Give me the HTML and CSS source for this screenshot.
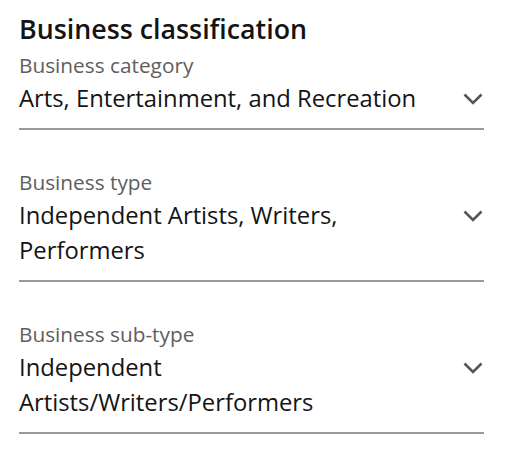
FILE: index.html
```html
<!DOCTYPE html>
<html>
<head>
<meta charset="utf-8">
<link rel="stylesheet" href="styles.css">
</head>
<body>
<section class="panel">
  <h2 class="title">Business classification</h2>
  <div class="field">
    <div class="label">Business category</div>
    <div class="control">
      <div class="value">Arts, Entertainment, and Recreation</div>
      <svg class="chev" viewBox="0 0 20 12" width="20" height="12"><path d="M1.5 1.5 L10 10 L18.5 1.5" fill="none" stroke="#555" stroke-width="2.6"/></svg>
    </div>
  </div>
  <div class="field">
    <div class="label">Business type</div>
    <div class="control">
      <div class="value">Independent Artists, Writers, Performers</div>
      <svg class="chev" viewBox="0 0 20 12" width="20" height="12"><path d="M1.5 1.5 L10 10 L18.5 1.5" fill="none" stroke="#555" stroke-width="2.6"/></svg>
    </div>
  </div>
  <div class="field">
    <div class="label">Business sub-type</div>
    <div class="control">
      <div class="value">Independent Artists/Writers/Performers</div>
      <svg class="chev" viewBox="0 0 20 12" width="20" height="12"><path d="M1.5 1.5 L10 10 L18.5 1.5" fill="none" stroke="#555" stroke-width="2.6"/></svg>
    </div>
  </div>
</section>
</body>
</html>
```
FILE: styles.css
```css
html, body {
  margin: 0;
  padding: 0;
  background: #fff;
}
body {
  font-family: "Open Sans", "Liberation Sans", sans-serif;
  color: #1a1a1a;
}
.panel {
  width: 465px;
  padding: 11px 0 0 19px;
}
.title {
  margin: 0 0 3px;
  font-size: 26.8px;
  font-weight: 600;
  line-height: 36px;
  color: #141414;
}
.field {
  border-bottom: 2px solid #9a9a9a;
  margin-bottom: 37px;
}
.label {
  font-size: 20.8px;
  line-height: 31px;
  color: #5e5e5e;
}
.control {
  display: flex;
  align-items: flex-start;
  justify-content: space-between;
  padding-bottom: 12px;
}
.value {
  flex: 1;
  margin-right: 24px;
  font-size: 23.8px;
  line-height: 35px;
  color: #141414;
}
.chev {
  margin: 12px 1px 0 0;
  flex: none;
}
```
